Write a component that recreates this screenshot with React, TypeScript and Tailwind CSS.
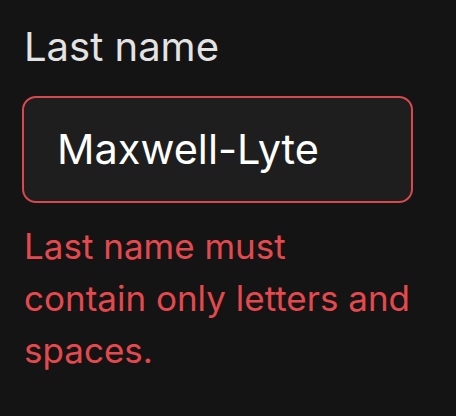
export default function App() {
  return (
    <div className="min-h-[416px] w-[456px] bg-[#141414] px-[22px] pt-[19px]" style={{ fontFamily: "Inter, 'Noto Sans', sans-serif" }}>
      <label className="block pl-[2px] text-[40px] leading-[56px] text-[#e3e3e3]">Last name</label>
      <div className="mt-[21px] flex h-[107px] w-[391px] items-center rounded-[14px] border-2 border-[#d9484c] bg-[#1e1e1e] px-[33px]">
        <span className="text-[41.5px] leading-none text-white">Maxwell-Lyte</span>
      </div>
      <p className="mt-[17px] w-[389px] pl-[2px] text-[35px] leading-[52px] text-[#e5484d]">
        Last name must contain only letters and spaces.
      </p>
    </div>
  );
}
